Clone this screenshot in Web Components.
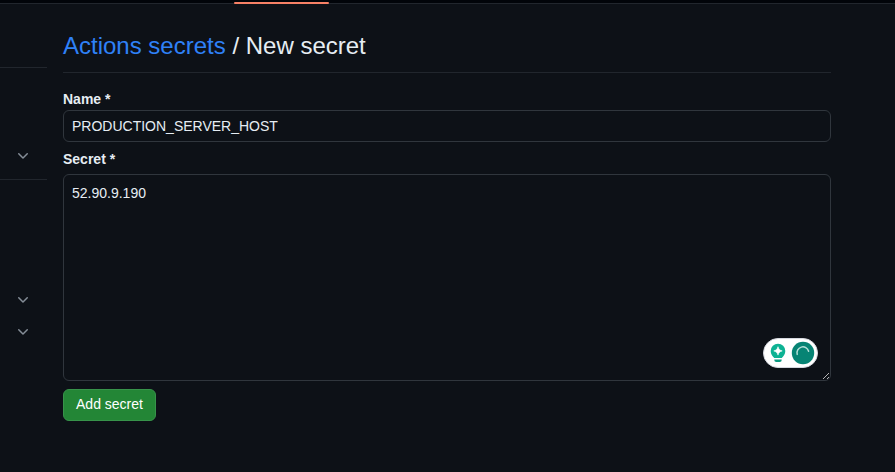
<!DOCTYPE html>
<html lang="en">
<head>
<meta charset="utf-8">
<title>New secret</title>
<style>
html,body{margin:0;height:100%;background:#0d1117;overflow:hidden}
body{font:14px/20px "Liberation Sans",Arial,sans-serif;color:#e6edf3}
</style>
</head>
<body>
<secret-page></secret-page>
<script>
function define(name, html) {
  const t = document.createElement('template');
  t.innerHTML = html;
  customElements.define(name, class extends HTMLElement {
    constructor() {
      super();
      this.attachShadow({mode: 'open'}).append(t.content.cloneNode(true));
    }
  });
}

define('tab-strip', `<style>
:host{display:block;height:4px;box-sizing:border-box;background:#010409;border-bottom:1px solid #21262d;padding:2px 0 0 233.6px}
i{display:block;width:95px;height:2px;background:#f78166;border-radius:1px}
</style><i></i>`);

define('chevron-icon', `<style>
:host{display:block;width:16px;height:16px;color:#848d97}
svg{display:block;fill:currentColor}
</style><svg width="16" height="16" viewBox="0 0 16 16"><path d="M12.78 5.22a.749.749 0 0 1 0 1.06l-4.25 4.25a.749.749 0 0 1-1.06 0L3.22 6.28a.749.749 0 1 1 1.06-1.06L8 8.939l3.72-3.719a.749.749 0 0 1 1.06 0Z"/></svg>`);

define('side-nav', `<style>
:host{display:block;width:47px}
section{box-sizing:border-box;display:flex;flex-direction:column;justify-content:flex-end;gap:16px;padding:0 0 0 15px}
.top{height:63px}
.mid{height:112px;border-top:1px solid #21262d;padding-bottom:15px}
.low{height:165px;border-top:1px solid #21262d;padding-bottom:4px}
</style>
<section class="top"></section>
<section class="mid"><chevron-icon></chevron-icon></section>
<section class="low"><chevron-icon></chevron-icon><chevron-icon></chevron-icon></section>`);

define('page-heading', `<style>
:host{display:block;height:49px;box-sizing:border-box;border-bottom:1px solid #21262d}
h2{margin:0;font-size:24px;line-height:36px;font-weight:400;padding-top:4px}
a{color:#2f81f7;text-decoration:none}
</style><h2><a><slot name="parent"></slot></a> / <slot></slot></h2>`);

define('form-field', `<style>
:host{display:block}
label{display:block;height:20px;line-height:20px;font-weight:700}
.box{box-sizing:border-box;height:var(--box-height,32px);border:1px solid #30363d;border-radius:6px;padding:var(--box-padding,5px 8px);position:relative;margin-top:var(--box-gap,1px)}
</style><label><slot name="label"></slot></label><div class="box"><slot></slot><slot name="overlay"></slot></div>`);

define('resize-grip', `<style>
:host{position:absolute;right:0;bottom:0;width:8px;height:8px}
svg{display:block}
</style><svg width="8" height="8" viewBox="0 0 8 8" fill="none" stroke="#c8c8c8" stroke-width=".9"><path d="M1 7L7 1M5 7L7 5"/></svg>`);

define('writing-assistant', `<style>
:host{position:absolute;right:12px;bottom:12px;width:55px;height:30px}
svg{display:block}
</style><svg width="55" height="30" viewBox="0 0 55 30">
<rect x=".5" y=".5" width="54" height="29" rx="14.5" fill="#fff" stroke="#d5d8df"/>
<path d="M15 5.7a7.3 7.3 0 0 0-7.3 7.3c0 3 1.6 4.8 3.1 6.4.3.4.5.5.8.5h6.8c.3 0 .5-.1.8-.5 1.5-1.6 3.1-3.4 3.1-6.4A7.3 7.3 0 0 0 15 5.7Z" fill="#0db293"/>
<path d="M15 8.7c.7 2.5 1.7 3.5 4.2 4.2-2.5.7-3.5 1.7-4.2 4.2-.7-2.5-1.7-3.5-4.2-4.2 2.5-.7 3.5-1.7 4.2-4.2Z" fill="#fff" stroke="#fff" stroke-width=".6"/>
<path d="M11.3 21.4h7.4v.7a2 2 0 0 1-2 2h-3.4a2 2 0 0 1-2-2Z" fill="#0a9a80"/>
<circle cx="40" cy="15" r="11.2" fill="#078474"/>
<path d="M34.2 16.4a5.9 5.9 0 0 1 11.4-3.2" fill="none" stroke="#b5e0d8" stroke-width="1.5" stroke-linecap="round"/>
</svg>`);

define('primary-button', `<style>
:host{display:block}
button{display:block;box-sizing:border-box;width:93px;height:32px;padding:0 0 2px;margin:0;border:1px solid #37934a;border-radius:6px;background:#238636;color:#fff;font:14px/20px "Liberation Sans",Arial,sans-serif}
</style><button><slot></slot></button>`);

define('secret-page', `<style>
:host{display:block}
.cols{display:flex;gap:16px}
main{width:768px;padding-top:20px}
.name{margin-top:16px}
.secret{margin-top:7px;--box-height:207px;--box-padding:8px;--box-gap:5px}
primary-button{margin-top:8px}
</style>
<tab-strip></tab-strip>
<div class="cols">
<side-nav></side-nav>
<main>
<page-heading><span slot="parent">Actions secrets</span>New secret</page-heading>
<form-field class="name"><span slot="label">Name *</span>PRODUCTION_SERVER_HOST</form-field>
<form-field class="secret"><span slot="label">Secret *</span>52.90.9.190<writing-assistant slot="overlay"></writing-assistant><resize-grip slot="overlay"></resize-grip></form-field>
<primary-button>Add secret</primary-button>
</main>
</div>`);
</script>
</body>
</html>
